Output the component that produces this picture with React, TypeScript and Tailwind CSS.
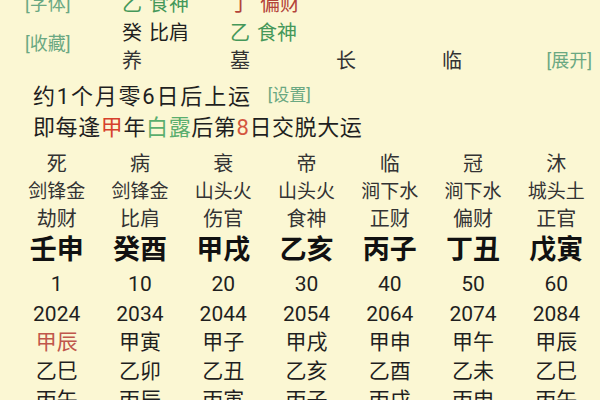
import React from 'react';

const font = { fontFamily: '"Roboto", "Noto Sans CJK SC", sans-serif' };

const stars = ['死', '病', '衰', '帝', '临', '冠', '沐'];
const nayin = ['剑锋金', '剑锋金', '山头火', '山头火', '涧下水', '涧下水', '城头土'];
const gods = ['劫财', '比肩', '伤官', '食神', '正财', '偏财', '正官'];
const pillars = ['壬申', '癸酉', '甲戌', '乙亥', '丙子', '丁丑', '戊寅'];
const ages = ['1', '10', '20', '30', '40', '50', '60'];
const years = ['2024', '2034', '2044', '2054', '2064', '2074', '2084'];
const jia = ['甲辰', '甲寅', '甲子', '甲戌', '甲申', '甲午', '甲辰'];
const yi = ['乙巳', '乙卯', '乙丑', '乙亥', '乙酉', '乙未', '乙巳'];
const bing = ['丙午', '丙辰', '丙寅', '丙子', '丙戌', '丙申', '丙午'];

function Row({ items, className, cell }: { items: string[]; className: string; cell?: (s: string, i: number) => string }) {
  return (
    <div className={`grid grid-cols-7 ${className}`}>
      {items.map((s, i) => (
        <div key={i} className={`text-center ${cell ? cell(s, i) : ''}`}>
          {s}
        </div>
      ))}
    </div>
  );
}

export default function App() {
  return (
    <div className="w-[600px] h-[400px] overflow-hidden bg-[#fbf7d3] text-[#1f1f1f]" style={font}>
      <div className="-mt-[10px]">
        {/* hidden pillars detail */}
        <div className="flex h-[85px]">
          <div className="w-[122px] pl-[25px] text-[18px] text-[#6aa882]">
            <div className="leading-[28px] h-[28px]">[字体]</div>
            <div className="leading-[28px] h-[28px] mt-[12px]">[收藏]</div>
          </div>
          <div className="flex-1 text-[20px]">
            <div className="grid grid-cols-[108px_106px_106px_1fr] h-[28.5px] leading-[28.5px]">
              <div className="flex gap-[7px] text-[#45985a]"><span>乙</span><span>食神</span></div>
              <div className="flex gap-[10px] text-[#b3433a]"><span>丁</span><span>偏财</span></div>
              <div />
              <div />
            </div>
            <div className="grid grid-cols-[108px_106px_106px_1fr] h-[28.5px] leading-[28.5px]">
              <div className="flex gap-[7px]"><span>癸</span><span>比肩</span></div>
              <div className="flex gap-[7px] text-[#45985a]"><span>乙</span><span>食神</span></div>
              <div />
              <div />
            </div>
            <div className="grid grid-cols-[108px_106px_106px_1fr] h-[28px] leading-[28px] text-[#333]">
              <div>养</div>
              <div>墓</div>
              <div>长</div>
              <div className="flex justify-between pr-[8px]">
                <span>临</span>
                <span className="text-[18px] text-[#6aa882]">[展开]</span>
              </div>
            </div>
          </div>
        </div>

        <div className="pl-[33px] mt-[4px] h-[34px] flex items-center text-[22px] tracking-[1.8px]">
          <span>约1个月零6日后上运</span>
          <span className="ml-[16px] text-[17px] tracking-normal text-[#6aa882]">[设置]</span>
        </div>
        <div className="pl-[33px] h-[28px] flex items-center text-[22px] tracking-[0.6px]">
          即每逢<span className="text-[#d6402c]">甲</span>年<span className="text-[#5aae6e]">白露</span>后第<span className="text-[#d4563f]">8</span>日交脱大运
        </div>

        <div className="mt-[9px] pl-[15px] pr-[2px]">
          <Row items={stars} className="h-[28px] leading-[28px] text-[20px] text-[#333]" />
          <Row items={nayin} className="h-[27px] leading-[27px] text-[19px] text-[#333]" />
          <Row items={gods} className="h-[28px] leading-[28px] text-[20px] text-[#333]" />
          <Row items={pillars} className="h-[35px] leading-[35px] text-[27px] font-bold text-[#111]" />
          <Row items={ages} className="h-[32px] leading-[32px] text-[21px]" />
          <Row items={years} className="h-[28px] leading-[28px] text-[21px]" />
          <Row
            items={jia}
            className="h-[29px] leading-[29px] text-[21px]"
            cell={(_, i) => (i === 0 ? 'text-[#c0564b]' : '')}
          />
          <Row items={yi} className="h-[29px] leading-[29px] text-[21px]" />
          <Row items={bing} className="h-[29px] leading-[29px] text-[21px]" />
        </div>
      </div>
    </div>
  );
}
